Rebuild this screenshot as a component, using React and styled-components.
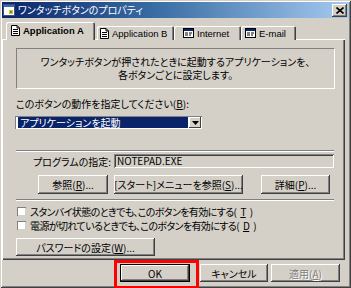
import React from 'react';
import styled, { createGlobalStyle } from 'styled-components';

const GlobalStyle = createGlobalStyle`
  html, body {
    margin: 0;
    padding: 0;
    background: #d4d0c8;
  }
  * {
    box-sizing: border-box;
  }
`;

const jp = `"Noto Sans CJK JP", "Liberation Sans", sans-serif`;

const Window = styled.div`
  width: 351px;
  height: 288px;
  background: #d4d0c8;
  box-shadow: inset 1px 1px #d4d0c8, inset -1px -1px #404040, inset 2px 2px #fff, inset -2px -2px #808080;
  padding: 2px;
  display: flex;
  flex-direction: column;
  font-family: ${jp};
  font-feature-settings: "palt";
  font-size: 10px;
  color: #000;
  overflow: hidden;
`;

const TitleBar = styled.div`
  height: 16px;
  display: flex;
  align-items: center;
  padding: 0 2px 0 1px;
  background: linear-gradient(to right, #0a246a 0%, #3a6ea5 45%, #a6caf0 100%);
`;

const TitleText = styled.span`
  flex: 1;
  margin-left: 3px;
  color: #fff;
  font-size: 10px;
  line-height: 16px;
  white-space: nowrap;
`;

const CloseButton = styled.div`
  width: 15px;
  height: 13px;
  background: #d4d0c8;
  box-shadow: inset -1px -1px #404040, inset 1px 1px #fff, inset -2px -2px #808080;
  display: flex;
  align-items: center;
  justify-content: center;
`;

const Body = styled.div`
  flex: 1;
  display: flex;
  flex-direction: column;
  padding: 4px 4px 0 0;
`;

const TabRow = styled.div`
  display: flex;
  align-items: flex-end;
  height: 18px;
  padding-left: 4px;
  position: relative;
  z-index: 1;
  margin-bottom: -1px;
`;

const Tab = styled.div`
  width: ${p => p.$w}px;
  height: ${p => (p.$active ? 18 : 14)}px;
  margin-right: ${p => p.$mr || 0}px;
  padding-left: ${p => p.$pl}px;
  display: flex;
  align-items: center;
  gap: 3px;
  background: #d4d0c8;
  border-radius: 2px 2px 0 0;
  box-shadow: inset 1px 1px #fff, inset -1px 0 #404040, inset -2px 0 #808080;
  font-family: "Liberation Sans", Arial, sans-serif;
  font-size: 9.5px;
  font-weight: ${p => (p.$active ? 700 : 400)};
  white-space: nowrap;
  overflow: hidden;
  padding-bottom: ${p => (p.$active ? 2 : 0)}px;
`;

const Panel = styled.div`
  height: 221px;
  background: #d4d0c8;
  box-shadow: inset 1px 1px #fff, inset -1px -1px #404040, inset -2px -2px #808080;
  padding: 9px 10px 0 14px;
  display: flex;
  flex-direction: column;
`;

const InfoBox = styled.div`
  height: 41px;
  border: 1px solid;
  border-color: #808080 #fff #fff #808080;
  display: flex;
  flex-direction: column;
  align-items: center;
  justify-content: center;
  line-height: 13px;
  padding-bottom: 1px;
`;

const Label = styled.div`
  margin-top: 9px;
  line-height: 11px;
  white-space: nowrap;
`;

const Select = styled.div`
  margin-top: 7px;
  margin-left: -1px;
  width: 187px;
  height: 13px;
  background: #fff;
  box-shadow: inset 1px 1px #808080, inset -1px -1px #fff;
  padding: 1px;
  display: flex;
`;

const SelectValue = styled.div`
  flex: 1;
  background: #0a246a;
  color: #fff;
  line-height: 11px;
  padding-left: 2px;
  margin: 0 1px 0 2px;
  white-space: nowrap;
`;

const DropButton = styled.div`
  width: 12px;
  height: 11px;
  background: #d4d0c8;
  box-shadow: inset -1px -1px #404040, inset 1px 1px #fff;
  display: flex;
  align-items: center;
  justify-content: center;
`;

const Separator = styled.div`
  height: 2px;
  margin-top: ${p => p.$mt}px;
  margin-right: 1px;
  border-top: 1px solid #808080;
  border-bottom: 1px solid #fff;
`;

const ProgramRow = styled.div`
  margin-top: 2px;
  display: flex;
  align-items: center;
  height: 14px;
`;

const ProgramLabel = styled.div`
  width: 98px;
  padding-left: 17px;
  white-space: nowrap;
`;

const TextField = styled.div`
  flex: 1;
  height: 14px;
  margin-right: 1px;
  background: #d4d0c8;
  box-shadow: inset 1px 1px #808080, inset -1px -1px #fff, inset 2px 2px #404040;
  padding-left: 3px;
  line-height: 14px;
`;

const ButtonRow = styled.div`
  margin-top: 7px;
  display: flex;
  padding-left: 22px;
  padding-right: 1px;
`;

const Button = styled.div`
  width: ${p => p.$w}px;
  height: ${p => p.$h || 19}px;
  margin-left: ${p => p.$ml || 0}px;
  margin-top: ${p => p.$mt || 0}px;
  background: #d4d0c8;
  box-shadow: inset -1px -1px #404040, inset 1px 1px #fff, inset -2px -2px #808080;
  border: ${p => (p.$default ? '1px solid #000' : 'none')};
  display: flex;
  align-items: center;
  justify-content: center;
  white-space: nowrap;
  color: ${p => (p.$disabled ? '#808080' : '#000')};
  text-shadow: ${p => (p.$disabled ? '1px 1px #fff' : 'none')};
`;

const CheckRow = styled.div`
  display: flex;
  align-items: center;
  height: 13px;
  margin-top: ${p => p.$mt}px;
  padding-left: 1px;
  gap: 4px;
  white-space: nowrap;
  letter-spacing: -0.6px;
`;

const CheckBox = styled.div`
  width: 9px;
  height: 9px;
  background: #fff;
  box-shadow: inset 1px 1px #808080, inset -1px -1px #d4d0c8;
`;

const Footer = styled.div`
  display: flex;
  align-items: flex-start;
  padding-left: 112px;
`;

const Highlight = styled.div`
  border: 3px solid #f00;
  padding: 1px 6px 4px 3px;
`;

const Key = styled.span`
  text-decoration: underline;
`;

const WinIcon = () => (
  <svg width="12" height="12" viewBox="0 0 12 12">
    <rect x="0.5" y="0.5" width="11" height="11" fill="#fff" stroke="#3a4e8a" />
    <rect x="1" y="1" width="10" height="2" fill="#3a6ea5" />
    <rect x="6" y="6" width="4" height="4" fill="#e0c020" />
    <rect x="7" y="7" width="2" height="2" fill="#40a040" />
  </svg>
);

const DocIcon = () => (
  <svg width="9" height="11" viewBox="0 0 9 11">
    <path d="M0.5 0.5 H6 L8.5 3 V10.5 H0.5 Z" fill="#fff" stroke="#000" />
    <path d="M6 0.5 V3 H8.5" fill="none" stroke="#000" />
    <path d="M2 4.5 H7 M2 6.5 H7 M2 8.5 H7" stroke="#000" />
  </svg>
);

const NetIcon = () => (
  <svg width="11" height="10" viewBox="0 0 11 10">
    <rect x="0.5" y="0.5" width="10" height="9" fill="#fff" stroke="#000" />
    <rect x="1" y="1" width="9" height="2" fill="#0a246a" />
    <path d="M2 5 H5 M2 7 H5 M6 5 H9 M6 7 H8" stroke="#000" />
  </svg>
);

const CloseX = () => (
  <svg width="8" height="7" viewBox="0 0 8 7">
    <path d="M0.5 0.5 L7.5 6.5 M7.5 0.5 L0.5 6.5" stroke="#000" strokeWidth="1.6" />
  </svg>
);

const Arrow = () => (
  <svg width="7" height="4" viewBox="0 0 7 4">
    <path d="M0 0 H7 L3.5 4 Z" fill="#000" />
  </svg>
);

export default function App() {
  return (
    <>
      <GlobalStyle />
      <Window>
        <TitleBar>
          <WinIcon />
          <TitleText>ワンタッチボタンのプロパティ</TitleText>
          <CloseButton>
            <CloseX />
          </CloseButton>
        </TitleBar>
        <Body>
          <TabRow>
            <Tab $active $w={89} $pl={5} $mr={2}>
              <DocIcon />
              Application A
            </Tab>
            <Tab $w={77} $pl={3}>
              <DocIcon />
              Application B
            </Tab>
            <Tab $w={67} $pl={9}>
              <NetIcon />
              Internet
            </Tab>
            <Tab $w={55} $pl={4}>
              <NetIcon />
              E-mail
            </Tab>
          </TabRow>
          <Panel>
            <InfoBox>
              <div>ワンタッチボタンが押されたときに起動するアプリケーションを、</div>
              <div>各ボタンごとに設定します。</div>
            </InfoBox>
            <Label>このボタンの動作を指定してください(<Key>B</Key>):</Label>
            <Select>
              <SelectValue>アプリケーションを起動</SelectValue>
              <DropButton>
                <Arrow />
              </DropButton>
            </Select>
            <Separator $mt={21} />
            <ProgramRow>
              <ProgramLabel>プログラムの指定:</ProgramLabel>
              <TextField>NOTEPAD.EXE</TextField>
            </ProgramRow>
            <ButtonRow>
              <Button $w={70}>参照(<Key>R</Key>)...</Button>
              <Button $w={129} $ml={6}>[スタート]メニューを参照(<Key>S</Key>)...</Button>
              <Button $w={69} $ml={18}>詳細(<Key>P</Key>)...</Button>
            </ButtonRow>
            <Separator $mt={5} />
            <CheckRow $mt={4}>
              <CheckBox />
              スタンバイ状態のときでも、このボタンを有効にする(<Key>T</Key>)
            </CheckRow>
            <CheckRow $mt={1}>
              <CheckBox />
              電源が切れているときでも、このボタンを有効にする(<Key>D</Key>)
            </CheckRow>
            <Button $w={139} $h={18} $mt={6}>
              パスワードの設定(<Key>W</Key>)...
            </Button>
          </Panel>
          <Footer>
            <Highlight>
              <Button $w={70} $h={18} $default>OK</Button>
            </Highlight>
            <Button $w={68} $h={18} $ml={1} $mt={4}>キャンセル</Button>
            <Button $w={69} $h={18} $ml={3} $mt={4} $disabled>適用(<Key>A</Key>)</Button>
          </Footer>
        </Body>
      </Window>
    </>
  );
}
